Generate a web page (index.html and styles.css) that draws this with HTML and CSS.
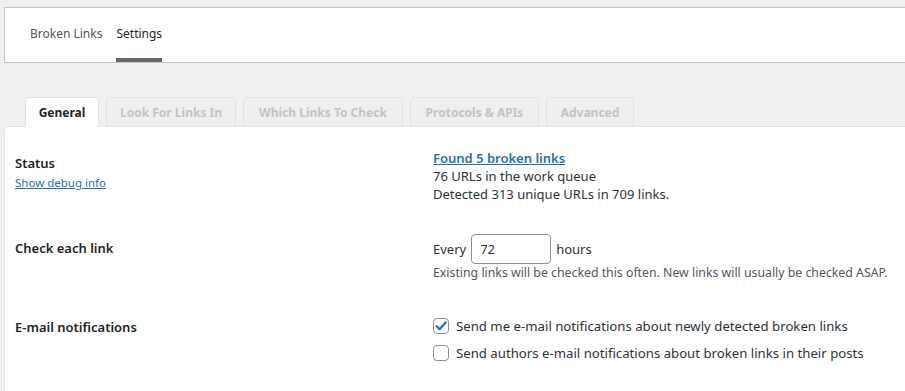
FILE: index.html
```html
<!DOCTYPE html>
<html lang="en">
<head>
    <meta charset="UTF-8">
    <title>Broken Link Checker - Settings</title>
    <link rel="stylesheet" href="styles.css">
</head>
<body>
    <div class="page">
        <div class="top-nav">
            <a class="nav-item" href="#">Broken Links</a>
            <a class="nav-item active" href="#">Settings</a>
        </div>

        <div class="tabs">
            <a class="tab tab-general active" href="#">General</a>
            <a class="tab tab-look" href="#">Look For Links In</a>
            <a class="tab tab-which" href="#">Which Links To Check</a>
            <a class="tab tab-protocols" href="#">Protocols &amp; APIs</a>
            <a class="tab tab-advanced" href="#">Advanced</a>
        </div>

        <div class="panel">
            <div class="row">
                <div class="label">
                    <div class="label-title">Status</div>
                    <a class="debug-link" href="#">Show debug info</a>
                </div>
                <div class="value">
                    <a class="status-link" href="#">Found 5 broken links</a>
                    <div class="line">76 URLs in the work queue</div>
                    <div class="line">Detected 313 unique URLs in 709 links.</div>
                </div>
            </div>

            <div class="row">
                <div class="label">
                    <div class="label-title">Check each link</div>
                </div>
                <div class="value">
                    <div class="interval">
                        <span>Every</span>
                        <input class="num-input" type="text" value="72">
                        <span>hours</span>
                    </div>
                    <div class="description">Existing links will be checked this often. New links will usually be checked ASAP.</div>
                </div>
            </div>

            <div class="row">
                <div class="label">
                    <div class="label-title">E-mail notifications</div>
                </div>
                <div class="value">
                    <label class="check-line">
                        <span class="checkbox checked">
                            <svg width="14" height="14" viewBox="0 0 14 14"><path d="M2.6 7.2 L5.6 10.2 L11.6 3.4" fill="none" stroke="#2271b1" stroke-width="2.2" stroke-linecap="round" stroke-linejoin="round"/></svg>
                        </span>
                        Send me e-mail notifications about newly detected broken links
                    </label>
                    <label class="check-line">
                        <span class="checkbox"></span>
                        Send authors e-mail notifications about broken links in their posts
                    </label>
                </div>
            </div>
        </div>
    </div>
</body>
</html>
```

FILE: styles.css
```css
body {
    margin: 0;
    background-color: #f0f0f1;
    font-family: "Noto Sans", "Open Sans", sans-serif;
    font-size: 13px;
    color: #2c3338;
    overflow: hidden;
}
a {
    text-decoration: none;
}
.page {
    padding: 7px 0 0 4px;
}
.top-nav {
    display: flex;
    gap: 14px;
    height: 54px;
    padding-left: 25px;
    background-color: white;
    border: 1px solid #c3c4c7;
    border-right: none;
}
.nav-item {
    display: flex;
    align-items: center;
    height: 50px;
    border-bottom: 4px solid transparent;
    font-size: 12px;
    color: #50575e;
}
.nav-item.active {
    color: #1d2327;
    border-bottom-color: #646970;
}
.tabs {
    display: flex;
    gap: 7px;
    margin-top: 34px;
    padding-left: 21px;
}
.tab {
    box-sizing: border-box;
    height: 29px;
    line-height: 29px;
    text-align: center;
    white-space: nowrap;
    border: 1px solid #e2e2e4;
    border-bottom: none;
    border-radius: 5px 5px 0 0;
    background-color: #efefef;
    color: #c3c4c7;
    font-size: 12px;
    font-weight: 700;
}
.tab.active {
    background-color: white;
    color: #1d2327;
    height: 30px;
    margin-bottom: -1px;
}
.tab-general { width: 74px; }
.tab-look { width: 130px; }
.tab-which { width: 160px; }
.tab-protocols { width: 129px; }
.tab-advanced { width: 88px; }
.panel {
    height: 264px;
    background-color: white;
    border-top: 1px solid #e2e2e4;
    border-left: 1px solid #e2e2e4;
    border-radius: 5px 0 0 0;
}
.row {
    display: flex;
    padding: 22px 0 9px;
}
.label {
    flex-shrink: 0;
    width: 418px;
    padding: 4px 0 0 10px;
}
.label-title {
    font-size: 13px;
    line-height: 20px;
    font-weight: 600;
    color: #1d2327;
}
.debug-link {
    font-size: 11.5px;
    line-height: 18px;
    color: #2271b1;
    text-decoration: underline;
}
.value {
    line-height: 18px;
}
.status-link {
    display: block;
    color: #2271b1;
    font-weight: 600;
    text-decoration: underline;
}
.interval {
    display: flex;
    align-items: center;
    gap: 5px;
}
.num-input {
    box-sizing: border-box;
    width: 80px;
    height: 30px;
    padding: 0 8px;
    border: 1px solid #8c8f94;
    border-radius: 4px;
    font-family: inherit;
    font-size: 13px;
    color: #2c3338;
}
.description {
    font-size: 12.3px;
    color: #50575e;
}
.check-line {
    display: flex;
    align-items: center;
    height: 26px;
    margin-bottom: 1px;
    font-size: 13.2px;
}
.checkbox {
    box-sizing: border-box;
    display: flex;
    align-items: center;
    justify-content: center;
    width: 16px;
    height: 16px;
    margin-right: 7px;
    border: 1px solid #8c8f94;
    border-radius: 4px;
    background-color: white;
}
```
